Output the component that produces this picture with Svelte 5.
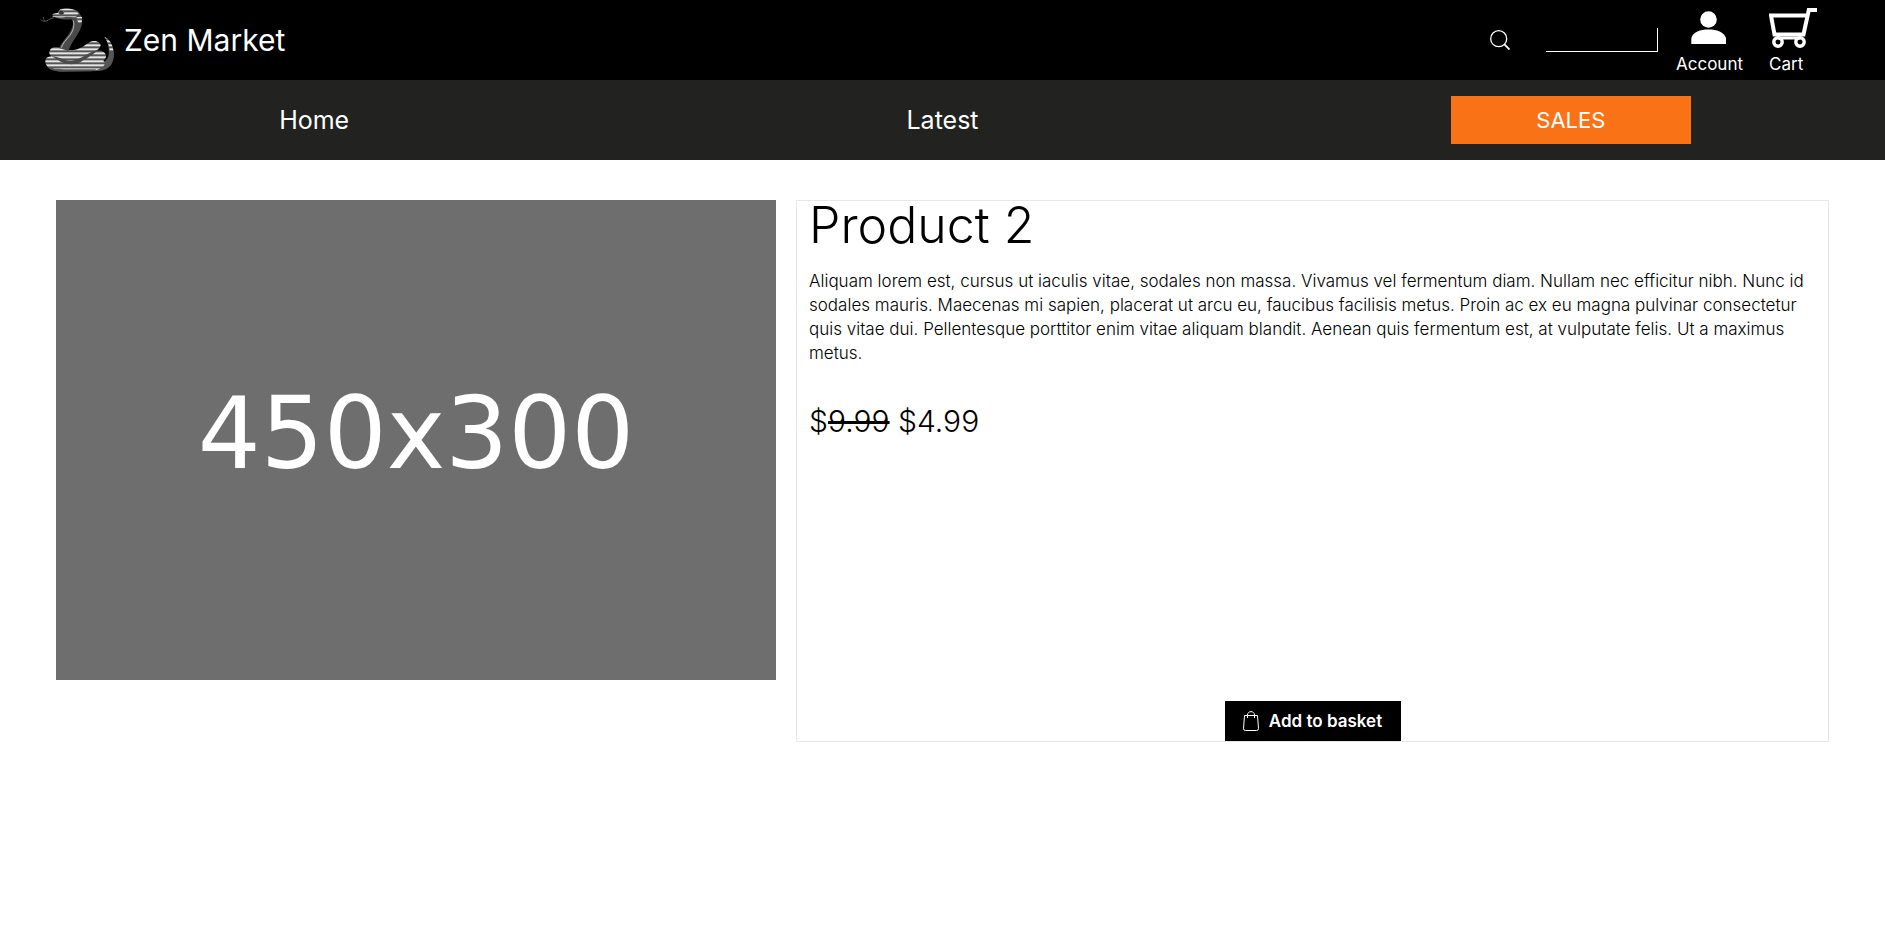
<script>
  const product = {
    name: 'Product 2',
    description:
      'Aliquam lorem est, cursus ut iaculis vitae, sodales non massa. Vivamus vel fermentum diam. Nullam nec efficitur nibh. Nunc id sodales mauris. Maecenas mi sapien, placerat ut arcu eu, faucibus facilisis metus. Proin ac ex eu magna pulvinar consectetur quis vitae dui. Pellentesque porttitor enim vitae aliquam blandit. Aenean quis fermentum est, at vulputate felis. Ut a maximus metus.',
    oldPrice: '9.99',
    price: '4.99',
    placeholder: '450x300'
  };
  let query = $state('');
</script>

<header class="top">
  <a class="brand" href="#home">
    <svg class="snake" viewBox="30 0 240 240" aria-hidden="true">
      <defs>
        <pattern id="stripes" width="12" height="12" patternUnits="userSpaceOnUse">
          <rect width="12" height="12" fill="#555" />
          <rect y="1" width="12" height="6" fill="#e6e6e6" />
        </pattern>
      </defs>
      <path d="M224 112 C238 118 251 138 252 162 C252 192 236 212 206 213 L168 212 L176 194 C212 196 234 184 236 162 C238 142 232 124 224 112Z" fill="#555" />
      <path d="M223 110 C237 116 248 132 250 154 L239 156 C239 138 233 124 223 110Z" fill="url(#stripes)" />
      <path d="M62 148 C72 138 92 142 110 150 L160 152 L214 152 C230 158 233 172 220 182 C236 196 204 214 172 214 L92 214 C62 212 44 198 46 182 C48 172 56 170 64 169 C56 162 56 154 62 148Z" fill="url(#stripes)" />
      <path d="M112 150 C140 156 162 138 178 127 C192 119 210 124 212 136 C212 148 184 160 166 174 C140 192 112 184 92 171 L64 169 C56 158 60 147 68 143 C82 140 98 145 112 150Z" fill="url(#stripes)" />
      <path d="M64 168 C88 170 98 182 122 182 C150 182 166 160 208 148 C190 164 166 178 152 186 C128 198 100 192 84 180Z" fill="#4b4b4b" />
      <path d="M50 198 C66 208 84 206 110 208 L196 208 L206 213 L92 215 C72 214 56 208 50 198Z" fill="#555" />
      <path d="M96 38 C116 22 144 26 150 42 C160 58 157 78 148 94 C136 116 124 128 115 154 C106 150 96 146 88 145 C94 126 112 112 122 92 C130 76 132 66 124 58 C108 60 88 58 68 50 C68 40 80 40 86 38 C86 26 98 24 106 28Z" fill="#4b4b4b" />
      <path d="M68 42 L84 38 C88 26 100 25 120 26 C134 28 142 34 146 42 L136 52 L110 50 C98 54 82 52 68 50Z" fill="url(#stripes)" />
      <path d="M139 52 L156 50 L155 68 L145 69Z" fill="url(#stripes)" />
      <path d="M130 62 C134 78 130 92 119 107 C108 120 98 130 94 143" fill="none" stroke="#bbb" stroke-width="3" />
      <ellipse cx="94" cy="38" rx="8" ry="7" fill="#333" stroke="#888" stroke-width="2" />
      <path d="M72 53 C58 55 54 64 44 64 C38 64 34 61 32 59 M46 63 C40 61 40 55 40 51" fill="none" stroke="#555" stroke-width="3" />
    </svg>
    <span>Zen Market</span>
  </a>

  <form class="search" onsubmit={(e) => e.preventDefault()}>
    <button class="search-button" type="submit" aria-label="Search">
      <svg viewBox="0 0 20 20" width="20" height="20" fill="none" stroke="#fff" stroke-width="1.3">
        <circle cx="8.7" cy="8.7" r="8" />
        <path d="M14.2 14.2 L19.5 19.5" stroke-width="1.8" />
      </svg>
    </button>
    <input type="text" aria-label="Search products" bind:value={query} />
  </form>

  <a class="action" href="#account">
    <svg viewBox="0 0 36 44" width="36" height="44" fill="#fff" aria-hidden="true">
      <circle cx="17.5" cy="19.5" r="8.3" />
      <path d="M0.3 44 V38 C2 32 9 29.5 17.5 29.5 S33 32 35 38 V44Z" />
    </svg>
    <span>Account</span>
  </a>
  <a class="action cart" href="#cart">
    <svg viewBox="0 0 48 41" width="48" height="41" fill="none" stroke="#fff" aria-hidden="true">
      <path d="M48 3 H39.8 L34.5 27.5 H5.5 L2 8.5 H38" stroke-width="4" />
      <path d="M9 31 H31" stroke-width="3" />
      <circle cx="9" cy="35" r="4.2" stroke-width="3.4" />
      <circle cx="31" cy="35" r="4.2" stroke-width="3.4" />
    </svg>
    <span>Cart</span>
  </a>
</header>

<nav>
  <a href="#home">Home</a>
  <a href="#latest">Latest</a>
  <a class="sales" href="#sales">SALES</a>
</nav>

<main>
  <div class="photo" role="img" aria-label="Product photo"><span>{product.placeholder}</span></div>
  <section class="details">
    <h1>{product.name}</h1>
    <p class="description">{product.description}</p>
    <p class="price">$<s>{product.oldPrice}</s> ${product.price}</p>
    <button class="basket" type="button">
      <svg viewBox="0 0 16 20" width="16" height="20" fill="none" stroke="#fff" aria-hidden="true">
        <path d="M1.5 4.5 H14.5 L15.5 17.5 Q15.5 19.5 13.5 19.5 H2.5 Q0.5 19.5 0.5 17.5Z" />
        <path d="M4.5 7 V4 C4.5 -0.5 11.5 -0.5 11.5 4 V7" />
      </svg>
      <span>Add to basket</span>
    </button>
  </section>
</main>

<style>
  :global(body) {
    margin: 0;
    background: #fff;
    color: #000;
    font-family: Inter, "Open Sans", sans-serif;
    font-size: 17px;
    line-height: 24px;
  }
  a {
    color: inherit;
    text-decoration: none;
  }
  .top {
    display: flex;
    align-items: center;
    height: 80px;
    padding: 0 68px 0 40px;
    background: #000;
    color: #fff;
  }
  .brand {
    display: flex;
    align-items: center;
    gap: 4px;
    margin-right: auto;
    font-size: 30px;
    line-height: 36px;
  }
  .snake {
    width: 80px;
    height: 80px;
  }
  .search {
    display: flex;
    align-items: center;
    gap: 36px;
    margin-right: 18px;
  }
  .search-button {
    display: flex;
    padding: 0;
    border: 0;
    background: none;
    cursor: pointer;
  }
  .search input {
    box-sizing: border-box;
    width: 112px;
    height: 24px;
    padding: 0 4px;
    border: 0;
    border-right: 1px solid #fff;
    border-bottom: 1px solid #fff;
    background: #000;
    color: #fff;
    font: inherit;
    outline: none;
  }
  .action {
    box-sizing: border-box;
    display: flex;
    flex-direction: column;
    align-items: center;
    justify-content: flex-end;
    height: 80px;
    gap: 8px;
    margin-right: 26px;
    padding-bottom: 4px;
  }
  .cart {
    align-items: flex-start;
    gap: 4px;
    margin-right: 0;
  }
  nav {
    display: grid;
    grid-template-columns: repeat(3, 1fr);
    align-items: center;
    justify-items: center;
    height: 80px;
    background: #222220;
    color: #fff;
    font-size: 25px;
    line-height: 32px;
  }
  .sales {
    box-sizing: border-box;
    width: 240px;
    padding: 8px;
    background: #f97316;
    font-size: 22px;
    text-align: center;
  }
  main {
    display: flex;
    align-items: flex-start;
    gap: 20px;
    padding: 40px 56px;
  }
  .photo {
    box-sizing: border-box;
    display: flex;
    align-items: center;
    justify-content: center;
    flex: 0 1 720px;
    aspect-ratio: 3 / 2;
    padding-bottom: 12px;
    background: #6e6e6e;
    color: #fff;
    font-family: "DejaVu Sans", sans-serif;
    font-size: 99px;
    line-height: 120px;
  }
  .details {
    box-sizing: border-box;
    display: flex;
    flex-direction: column;
    flex: 1;
    min-height: 542px;
    padding: 0 12px;
    border: 1px solid #e5e7eb;
  }
  h1 {
    margin: 0 0 20px;
    font-size: 50px;
    font-weight: 300;
    line-height: 48px;
  }
  .description {
    margin: 0;
    font-weight: 300;
  }
  .price {
    margin: 36px 0;
    font-size: 30px;
    font-weight: 300;
    line-height: 40px;
  }
  .basket {
    display: flex;
    align-items: center;
    justify-content: center;
    align-self: center;
    gap: 10px;
    width: 176px;
    height: 40px;
    margin-top: auto;
    padding: 0;
    border: 0;
    background: #000;
    color: #fff;
    font: inherit;
    font-weight: 600;
    cursor: pointer;
  }
</style>
